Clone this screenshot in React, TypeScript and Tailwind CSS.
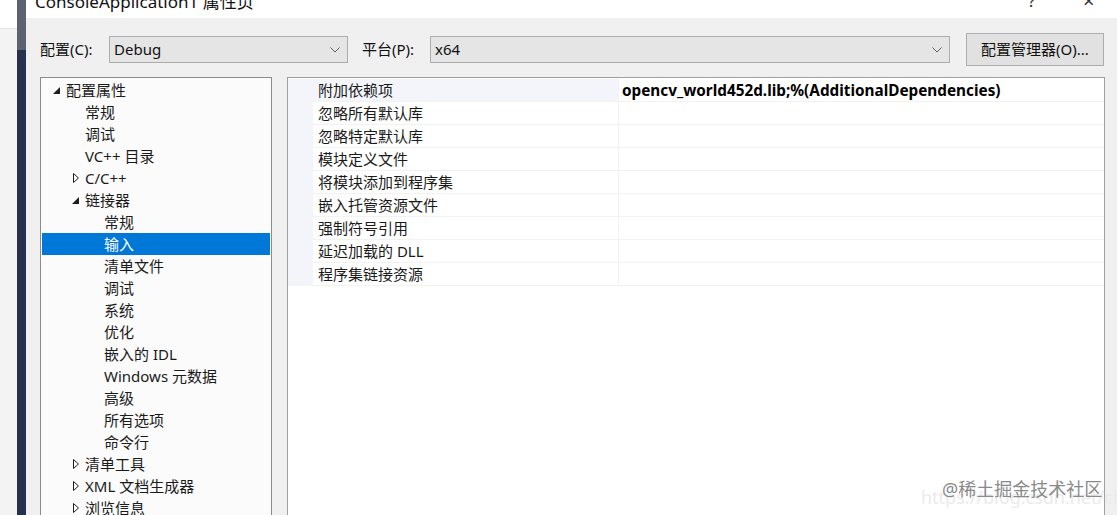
import React from "react";

const font = { fontFamily: '"Noto Sans", "Noto Sans CJK SC", sans-serif' };

type TreeItem = {
  label: string;
  level: 0 | 1 | 2;
  icon?: "open" | "closed";
  selected?: boolean;
};

const tree: TreeItem[] = [
  { label: "配置属性", level: 0, icon: "open" },
  { label: "常规", level: 1 },
  { label: "调试", level: 1 },
  { label: "VC++ 目录", level: 1 },
  { label: "C/C++", level: 1, icon: "closed" },
  { label: "链接器", level: 1, icon: "open" },
  { label: "常规", level: 2 },
  { label: "输入", level: 2, selected: true },
  { label: "清单文件", level: 2 },
  { label: "调试", level: 2 },
  { label: "系统", level: 2 },
  { label: "优化", level: 2 },
  { label: "嵌入的 IDL", level: 2 },
  { label: "Windows 元数据", level: 2 },
  { label: "高级", level: 2 },
  { label: "所有选项", level: 2 },
  { label: "命令行", level: 2 },
  { label: "清单工具", level: 1, icon: "closed" },
  { label: "XML 文档生成器", level: 1, icon: "closed" },
  { label: "浏览信息", level: 1, icon: "closed" },
];

const props = [
  "附加依赖项",
  "忽略所有默认库",
  "忽略特定默认库",
  "模块定义文件",
  "将模块添加到程序集",
  "嵌入托管资源文件",
  "强制符号引用",
  "延迟加载的 DLL",
  "程序集链接资源",
];

function Chevron() {
  return (
    <svg width="10" height="6" viewBox="0 0 10 6" className="shrink-0">
      <path d="M0.5 0.5 L5 5 L9.5 0.5" fill="none" stroke="#606060" strokeWidth="1" />
    </svg>
  );
}

function Arrow({ kind }: { kind: "open" | "closed" }) {
  if (kind === "open") {
    return (
      <svg width="7" height="7" viewBox="0 0 7 7">
        <polygon points="7,0 7,7 0,7" fill="#1e1e1e" />
      </svg>
    );
  }
  return (
    <svg width="6" height="10" viewBox="0 0 6 10">
      <polygon points="0.5,0.5 5.5,5 0.5,9.5" fill="none" stroke="#1e1e1e" strokeWidth="1" />
    </svg>
  );
}

function Combo({ value, width }: { value: string; width: string }) {
  return (
    <div
      className={`${width} h-[27px] flex items-center justify-between bg-[#e5e5e5] border border-[#adadad] pl-[4px] pr-[7px] text-[15px] text-[#111]`}
    >
      <span>{value}</span>
      <Chevron />
    </div>
  );
}

export default function App() {
  return (
    <div className="w-[1117px] h-[515px] overflow-hidden flex bg-white relative" style={font}>
      {/* desktop edge */}
      <div className="w-[17px] flex flex-col">
        <div className="h-[28px] bg-white" />
        <div className="flex-1 bg-[#f3f3f3] border-t border-[#e4e4e4]" />
      </div>
      <div className="w-[9px] flex flex-col">
        <div className="h-[50px] bg-[#5d6270]" />
        <div className="flex-1 bg-[#27304f]" />
      </div>

      {/* dialog */}
      <div className="flex-1 flex flex-col bg-[#f0f0f0]">
        <div className="h-[18px] bg-white relative overflow-hidden text-[17px] text-[#111]">
          <div className="absolute left-[9px] top-[-11px]">ConsoleApplication1 属性页</div>
          <div className="absolute left-[1002px] top-[-12px] text-[#333]">?</div>
          <div className="absolute left-[1057px] top-[-14px] text-[20px] text-[#333]">×</div>
        </div>

        <div className="h-[59px] flex items-center pt-[4px] pl-[14px] pr-[12px] text-[15px] text-[#111]">
          <span className="w-[69px]">配置(C):</span>
          <Combo value="Debug" width="w-[239px]" />
          <span className="ml-[14px] w-[68px]">平台(P):</span>
          <Combo value="x64" width="w-[520px]" />
          <div className="ml-[16px] w-[138px] h-[33px] flex items-center justify-center bg-[#e1e1e1] border border-[#adadad]">
            配置管理器(O)...
          </div>
        </div>

        <div className="flex-1 flex pl-[14px] pr-[12px] gap-[15px] min-h-0">
          {/* tree */}
          <div className="w-[232px] bg-[#fbfbfb] border border-[#8c8c8c] border-b-0 pt-[1px] px-[1px] text-[15px] text-[#1a1a1a] overflow-hidden">
            {tree.map((t, i) => (
              <div
                key={i}
                className={`h-[22px] flex items-center shrink-0 ${
                  t.selected ? "bg-[#0078d7] text-white" : ""
                }`}
              >
                <div
                  className={`flex items-center justify-center w-[19px] ${
                    t.level === 0 ? "ml-[5px]" : t.level === 1 ? "ml-[24px]" : "ml-[43px]"
                  }`}
                >
                  {t.icon && <Arrow kind={t.icon} />}
                </div>
                <span>{t.label}</span>
              </div>
            ))}
          </div>

          {/* property grid */}
          <div className="flex-1 bg-white border border-[#a0a0a0] border-b-0 pt-[1px] text-[15px] text-[#1a1a1a]">
            {props.map((p, i) => (
              <div key={i} className="h-[23px] flex">
                <div className="w-[25px] bg-[#f3f5fb]" />
                <div
                  className={`w-[305px] flex items-center pl-[5px] border-b border-[#f2f2f2] ${
                    i === 0 ? "bg-[#f3f5fb]" : ""
                  }`}
                >
                  {p}
                </div>
                <div className="flex-1 flex items-center pl-[3px] border-l border-b border-[#f2f2f2]">
                  {i === 0 && (
                    <span className="font-bold text-[15.3px] text-black">
                      opencv_world452d.lib;%(AdditionalDependencies)
                    </span>
                  )}
                </div>
              </div>
            ))}
          </div>
        </div>
      </div>

      {/* watermark */}
      <div className="absolute left-[921px] top-[484px] text-[18px] text-[#ebebeb] whitespace-nowrap">
        https://blog.csdn.net/chaigi
      </div>
      <div className="absolute left-[942px] top-[476px] text-[18px] text-[#8a8a8a] whitespace-nowrap">
        @稀土掘金技术社区
      </div>
    </div>
  );
}
